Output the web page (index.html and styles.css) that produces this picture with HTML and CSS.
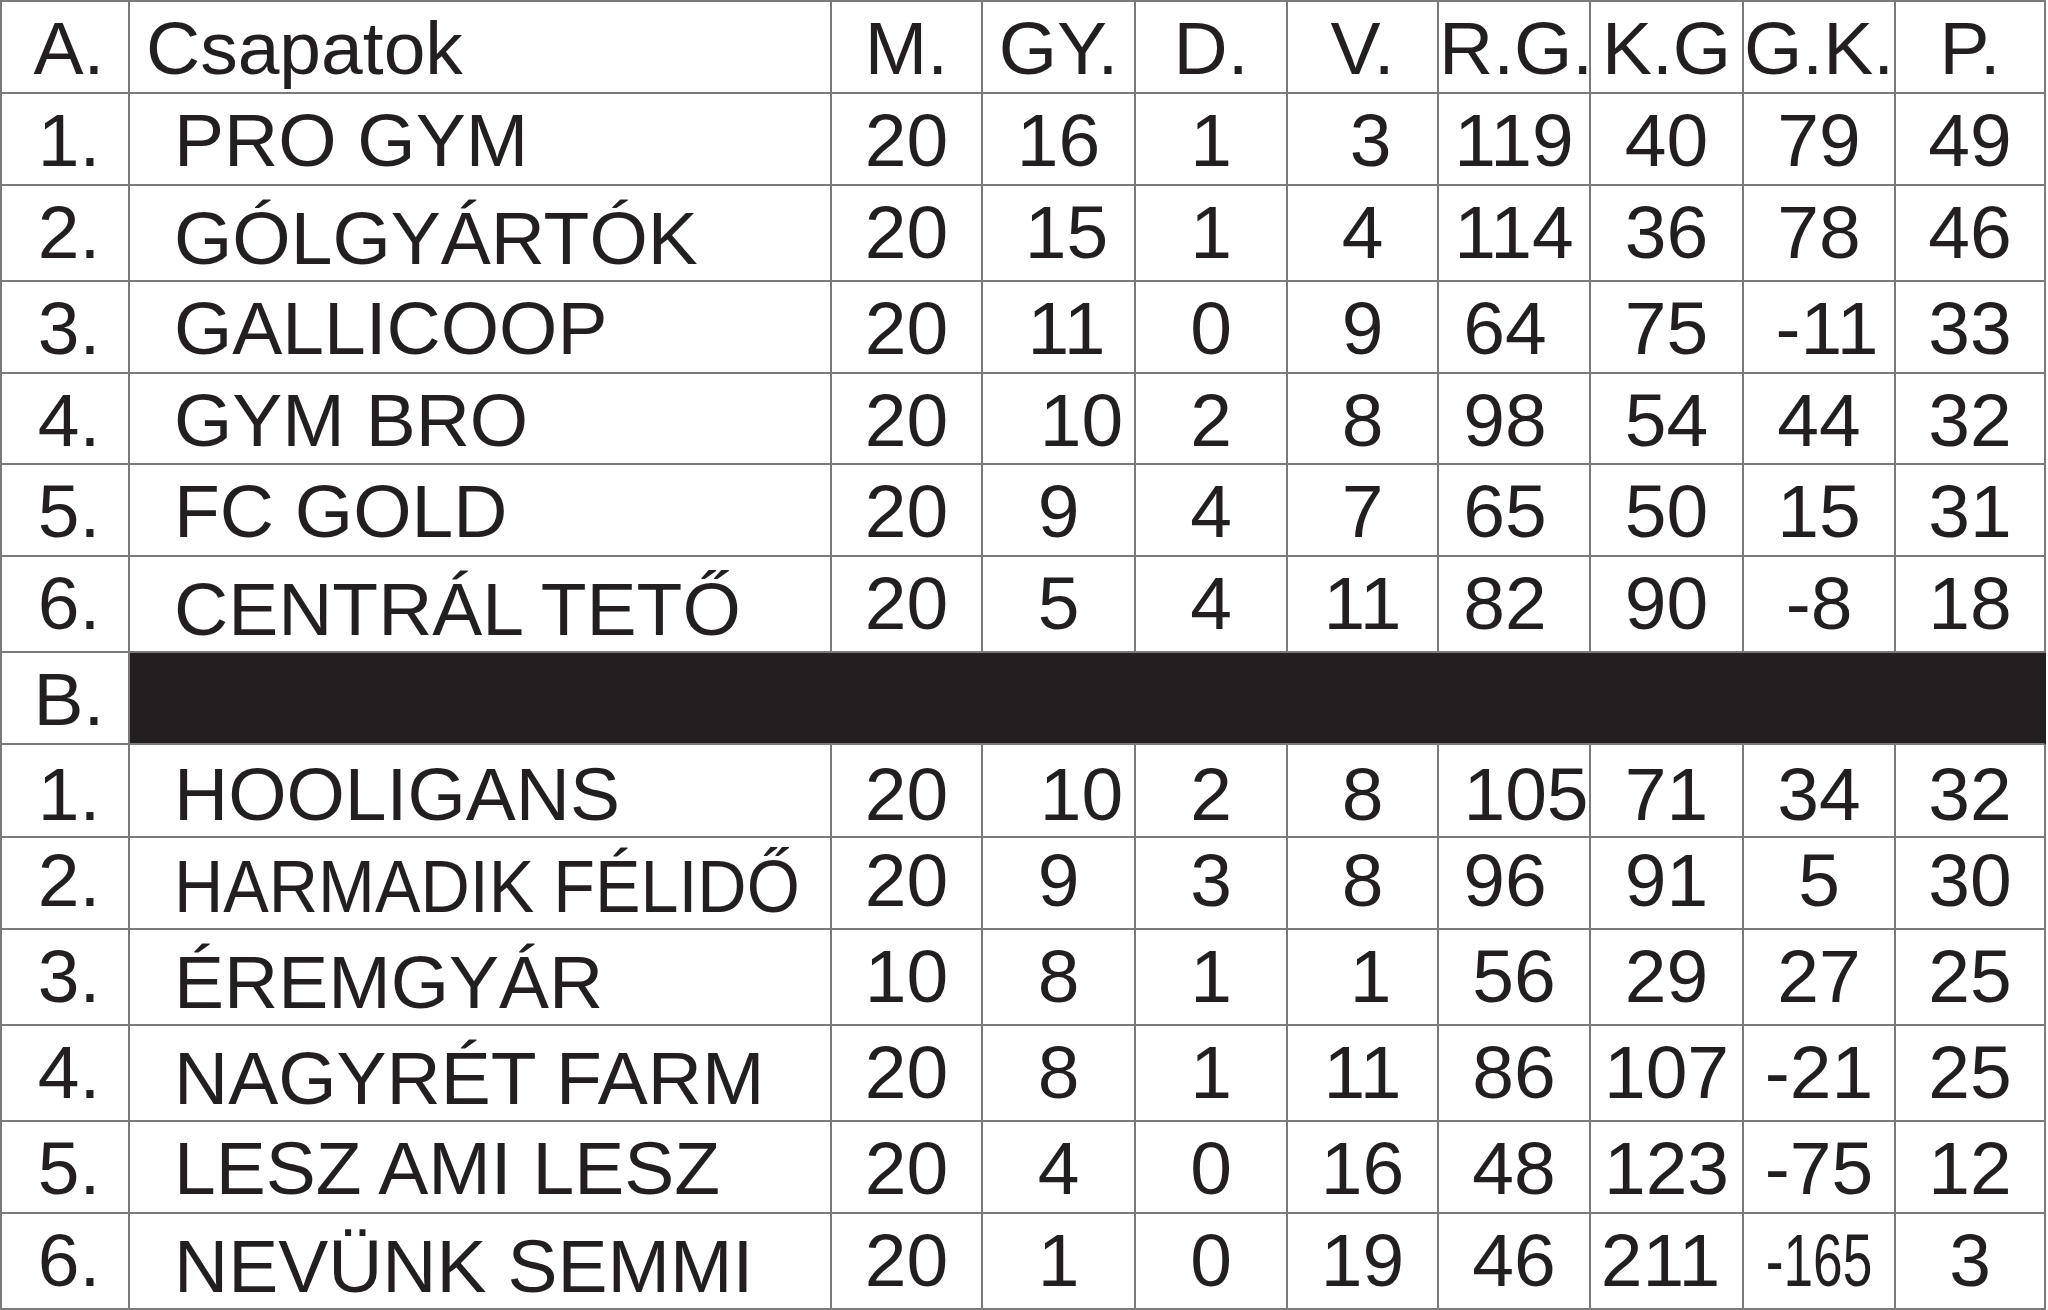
FILE: index.html
```html
<!DOCTYPE html>
<html lang="hu">
<head>
<meta charset="utf-8">
<title>Tabella</title>
<link rel="stylesheet" href="styles.css">
</head>
<body>
<main class="standings">
  <div class="row head">
    <div class="cell label">A.</div>
    <div class="cell name title">Csapatok</div>
    <div class="cell num">M.</div>
    <div class="cell num">GY.</div>
    <div class="cell num">D.</div>
    <div class="cell num">V.</div>
    <div class="cell num">R.G.</div>
    <div class="cell num">K.G</div>
    <div class="cell num">G.K.</div>
    <div class="cell num">P.</div>
  </div>

  <div class="row">
    <div class="cell label">1.</div>
    <div class="cell name">PRO GYM</div>
    <div class="cell num">20</div>
    <div class="cell num">16</div>
    <div class="cell num">1</div>
    <div class="cell num nudge-r">3</div>
    <div class="cell num">119</div>
    <div class="cell num">40</div>
    <div class="cell num">79</div>
    <div class="cell num">49</div>
  </div>

  <div class="row">
    <div class="cell label">2.</div>
    <div class="cell name accent">GÓLGYÁRTÓK</div>
    <div class="cell num">20</div>
    <div class="cell num nudge-r">15</div>
    <div class="cell num">1</div>
    <div class="cell num">4</div>
    <div class="cell num">114</div>
    <div class="cell num">36</div>
    <div class="cell num">78</div>
    <div class="cell num">46</div>
  </div>

  <div class="row">
    <div class="cell label">3.</div>
    <div class="cell name">GALLICOOP</div>
    <div class="cell num">20</div>
    <div class="cell num nudge-r">11</div>
    <div class="cell num">0</div>
    <div class="cell num">9</div>
    <div class="cell num nudge-l">64</div>
    <div class="cell num">75</div>
    <div class="cell num nudge-r">-11</div>
    <div class="cell num">33</div>
  </div>

  <div class="row">
    <div class="cell label">4.</div>
    <div class="cell name">GYM BRO</div>
    <div class="cell num">20</div>
    <div class="cell num nudge-rr">10</div>
    <div class="cell num">2</div>
    <div class="cell num">8</div>
    <div class="cell num nudge-l">98</div>
    <div class="cell num">54</div>
    <div class="cell num">44</div>
    <div class="cell num">32</div>
  </div>

  <div class="row">
    <div class="cell label">5.</div>
    <div class="cell name">FC GOLD</div>
    <div class="cell num">20</div>
    <div class="cell num">9</div>
    <div class="cell num">4</div>
    <div class="cell num">7</div>
    <div class="cell num nudge-l">65</div>
    <div class="cell num">50</div>
    <div class="cell num">15</div>
    <div class="cell num">31</div>
  </div>

  <div class="row">
    <div class="cell label">6.</div>
    <div class="cell name accent">CENTRÁL TETŐ</div>
    <div class="cell num">20</div>
    <div class="cell num">5</div>
    <div class="cell num">4</div>
    <div class="cell num">11</div>
    <div class="cell num nudge-l">82</div>
    <div class="cell num">90</div>
    <div class="cell num">-8</div>
    <div class="cell num">18</div>
  </div>

  <div class="row group">
    <div class="cell label">B.</div>
    <div class="cell band"></div>
  </div>

  <div class="row low">
    <div class="cell label">1.</div>
    <div class="cell name">HOOLIGANS</div>
    <div class="cell num">20</div>
    <div class="cell num nudge-rr">10</div>
    <div class="cell num">2</div>
    <div class="cell num">8</div>
    <div class="cell num nudge-r2">105</div>
    <div class="cell num">71</div>
    <div class="cell num">34</div>
    <div class="cell num">32</div>
  </div>

  <div class="row high">
    <div class="cell label">2.</div>
    <div class="cell name accent"><span class="squeeze">HARMADIK FÉLIDŐ</span></div>
    <div class="cell num">20</div>
    <div class="cell num">9</div>
    <div class="cell num">3</div>
    <div class="cell num">8</div>
    <div class="cell num nudge-l">96</div>
    <div class="cell num">91</div>
    <div class="cell num">5</div>
    <div class="cell num">30</div>
  </div>

  <div class="row">
    <div class="cell label">3.</div>
    <div class="cell name accent">ÉREMGYÁR</div>
    <div class="cell num">10</div>
    <div class="cell num">8</div>
    <div class="cell num">1</div>
    <div class="cell num nudge-r">1</div>
    <div class="cell num">56</div>
    <div class="cell num">29</div>
    <div class="cell num">27</div>
    <div class="cell num">25</div>
  </div>

  <div class="row">
    <div class="cell label">4.</div>
    <div class="cell name accent">NAGYRÉT FARM</div>
    <div class="cell num">20</div>
    <div class="cell num">8</div>
    <div class="cell num">1</div>
    <div class="cell num">11</div>
    <div class="cell num">86</div>
    <div class="cell num">107</div>
    <div class="cell num">-21</div>
    <div class="cell num">25</div>
  </div>

  <div class="row">
    <div class="cell label">5.</div>
    <div class="cell name">LESZ AMI LESZ</div>
    <div class="cell num">20</div>
    <div class="cell num">4</div>
    <div class="cell num">0</div>
    <div class="cell num">16</div>
    <div class="cell num">48</div>
    <div class="cell num">123</div>
    <div class="cell num">-75</div>
    <div class="cell num">12</div>
  </div>

  <div class="row">
    <div class="cell label">6.</div>
    <div class="cell name accent">NEVÜNK SEMMI</div>
    <div class="cell num">20</div>
    <div class="cell num">1</div>
    <div class="cell num">0</div>
    <div class="cell num">19</div>
    <div class="cell num">46</div>
    <div class="cell num nudge-l6">211</div>
    <div class="cell num"><span class="narrow">-165</span></div>
    <div class="cell num">3</div>
  </div>
</main>
</body>
</html>
```

FILE: styles.css
```css
html, body {
  margin: 0;
  padding: 0;
  background: #ffffff;
}

body {
  width: 2048px;
  height: 1310px;
  overflow: hidden;
}

.standings {
  display: grid;
  grid-template-columns: 128px 702px 151px 153px 152px 151px 152px 153px 152px 150px;
  grid-template-rows: repeat(14, 1fr);
  width: 2046px;
  height: 1310px;
  box-sizing: border-box;
  border-top: 2px solid #7a7a7a;
  border-left: 2px solid #7a7a7a;
  font-family: "Liberation Sans", Arial, sans-serif;
  font-size: 75px;
  line-height: 84px;
  color: #231f20;
}

.row {
  display: contents;
}

.cell {
  box-sizing: border-box;
  border-right: 2px solid #7a7a7a;
  border-bottom: 2px solid #7a7a7a;
  padding-top: 4px;
  white-space: nowrap;
  min-width: 0;
}

.label {
  text-align: center;
  padding-left: 8px;
}

.num {
  text-align: center;
}

.name {
  text-align: left;
  padding-left: 44px;
}

.name.title {
  padding-left: 16px;
}

.name.accent {
  padding-top: 10px;
}

.row.low .cell {
  padding-top: 7px;
}

.row.high .cell {
  padding-top: 0;
}

.row.high .name.accent {
  padding-top: 6px;
}

.band {
  grid-column: 2 / 11;
  background: #231f20;
  border-right-color: #231f20;
}

.squeeze {
  display: inline-block;
  transform: scaleX(0.91);
  transform-origin: left center;
}

.narrow {
  display: inline-block;
  transform: scaleX(0.71);
  transform-origin: center center;
}

.nudge-r {
  padding-left: 16px;
}

.nudge-rr {
  padding-left: 46px;
}

.nudge-r2 {
  padding-left: 24px;
}

.nudge-l {
  padding-right: 18px;
}

.nudge-l6 {
  padding-right: 12px;
}
```
